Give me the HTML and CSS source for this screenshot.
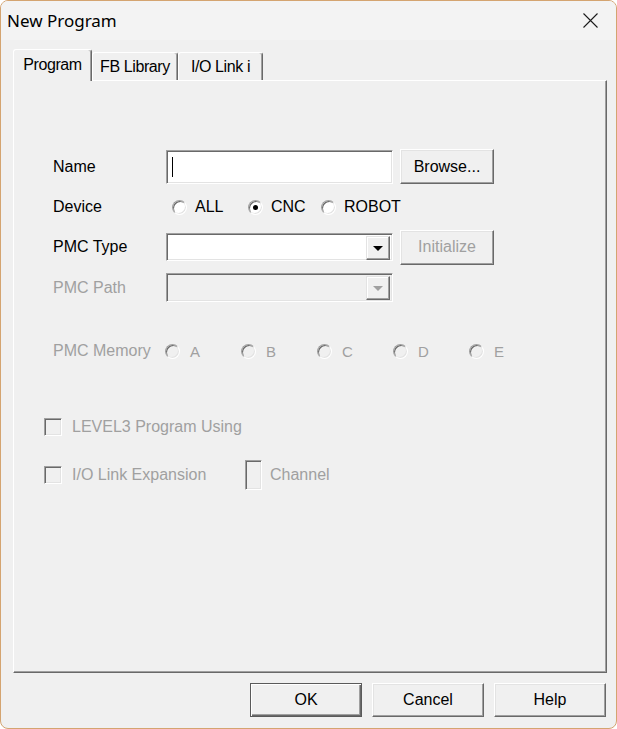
FILE: index.html
```html
<!DOCTYPE html>
<html lang="en">
<head>
    <meta charset="UTF-8">
    <title>New Program</title>
    <link rel="stylesheet" href="styles.css">
</head>
<body>
    <div class="window">
        <div class="titlebar">
            <span class="title">New Program</span>
            <span class="close">
                <svg width="15" height="15" viewBox="0 0 15 15">
                    <path d="M0.5 0.5 L14.5 14.5 M14.5 0.5 L0.5 14.5" stroke="#1b1b1b" stroke-width="1.1" fill="none"/>
                </svg>
            </span>
        </div>

        <div class="tabs">
            <div class="tab tab-program active">Program</div>
            <div class="tab tab-fb">FB Library</div>
            <div class="tab tab-io">I/O Link i</div>
        </div>

        <div class="panel">
            <!-- Name -->
            <div class="row row-name">
                <span class="label">Name</span>
                <div class="field"><span class="caret"></span></div>
                <button class="btn btn-side">Browse...</button>
            </div>

            <!-- Device -->
            <div class="row row-device">
                <span class="label">Device</span>
                <div class="options options-device">
                    <span class="opt opt-all"><span class="radio"></span>ALL</span>
                    <span class="opt opt-cnc"><span class="radio checked"></span>CNC</span>
                    <span class="opt"><span class="radio"></span>ROBOT</span>
                </div>
            </div>

            <!-- PMC Type -->
            <div class="row row-type">
                <span class="label">PMC Type</span>
                <div class="combo">
                    <span class="combo-value"></span>
                    <span class="drop"><span class="arrow"></span></span>
                </div>
                <button class="btn btn-side disabled">Initialize</button>
            </div>

            <!-- PMC Path -->
            <div class="row row-path">
                <span class="label disabled">PMC Path</span>
                <div class="combo combo-disabled">
                    <span class="combo-value"></span>
                    <span class="drop"><span class="arrow"></span></span>
                </div>
            </div>

            <!-- PMC Memory -->
            <div class="row row-memory">
                <span class="label disabled">PMC Memory</span>
                <div class="options options-memory">
                    <span class="opt mem"><span class="radio off"></span>A</span>
                    <span class="opt mem"><span class="radio off"></span>B</span>
                    <span class="opt mem"><span class="radio off"></span>C</span>
                    <span class="opt mem"><span class="radio off"></span>D</span>
                    <span class="opt mem"><span class="radio off"></span>E</span>
                </div>
            </div>

            <!-- Checkboxes -->
            <div class="row row-check row-level">
                <span class="check"></span>
                <span class="check-text">LEVEL3 Program Using</span>
            </div>
            <div class="row row-check row-link">
                <span class="check"></span>
                <span class="check-text link-text">I/O Link Expansion</span>
                <span class="check tall"></span>
                <span class="check-text">Channel</span>
            </div>
        </div>

        <div class="footer">
            <button class="btn btn-foot btn-default">OK</button>
            <button class="btn btn-foot">Cancel</button>
            <button class="btn btn-foot">Help</button>
        </div>
    </div>
</body>
</html>
```

FILE: styles.css
```css
/* Reset basic styles */
* {
    margin: 0;
    padding: 0;
    box-sizing: border-box;
}

body {
    background: #ffffff;
    font-family: 'Liberation Sans', Arial, sans-serif;
    font-size: 16px;
    color: #000000;
}

.window {
    width: 617px;
    height: 729px;
    border: 1px solid #d4a470;
    border-radius: 8px;
    background: #f0f0f0;
    overflow: hidden;
    display: flex;
    flex-direction: column;
}

/* Title bar */
.titlebar {
    height: 39px;
    flex-shrink: 0;
    background: #f3f3f3;
    display: flex;
    align-items: center;
    justify-content: space-between;
    padding-left: 6px;
}

.title {
    font-family: 'Noto Sans', 'Open Sans', sans-serif;
    font-size: 17px;
    color: #000000;
}

.close {
    width: 15px;
    height: 15px;
    margin-right: 18px;
    display: flex;
}

/* Tabs */
.tabs {
    height: 40px;
    flex-shrink: 0;
    display: flex;
    align-items: flex-end;
    padding-left: 12px;
}

.tab {
    height: 28px;
    display: flex;
    align-items: center;
    justify-content: center;
    font-size: 16px;
    letter-spacing: -0.4px;
    border-top: 1px solid #ffffff;
    border-left: 1px solid #ffffff;
    border-right: 1px solid #696969;
    box-shadow: inset -1px 0 #a0a0a0;
    border-radius: 3px 3px 0 0;
    background: #f0f0f0;
    padding-top: 1px;
}

.tab.active {
    height: 32px;
    margin-bottom: -1px;
    position: relative;
    z-index: 1;
    padding-bottom: 2px;
}

.tab-program { width: 79px; }
.tab-fb { width: 86px; }
.tab-io { width: 85px; }

/* Panel */
.panel {
    height: 593px;
    margin: 0 9px 0 12px;
    border: 1px solid;
    border-color: #ffffff #696969 #696969 #ffffff;
    box-shadow: inset -1px -1px #a0a0a0;
    padding-top: 68px;
}

.row {
    display: flex;
    align-items: center;
    padding-left: 39px;
}

.label {
    width: 113px;
    flex-shrink: 0;
}

.disabled {
    color: #a0a0a0;
}

/* Sunken text field */
.field {
    width: 227px;
    height: 34px;
    background: #ffffff;
    border: 1px solid;
    border-color: #a0a0a0 #ffffff #ffffff #a0a0a0;
    box-shadow: inset 1px 1px #696969, inset -1px -1px #e3e3e3;
    display: flex;
    align-items: center;
    padding-left: 5px;
}

.caret {
    width: 1px;
    height: 20px;
    background: #000000;
}

/* Raised buttons */
.btn {
    font-family: 'Liberation Sans', Arial, sans-serif;
    font-size: 16px;
    color: #000000;
    background: #f0f0f0;
    border: 1px solid;
    border-color: #ffffff #696969 #696969 #ffffff;
    box-shadow: inset -1px -1px #a0a0a0, inset 1px 1px #e3e3e3;
}

.btn.disabled {
    color: #a0a0a0;
}

.btn-side {
    width: 94px;
    height: 35px;
    margin-left: 7px;
}

.row-name {
    height: 35px;
}

/* Radio options */
.row-device {
    height: 26px;
    margin-top: 10px;
}

.options {
    display: flex;
    align-items: center;
}

.options-device {
    margin-left: 6px;
}

.opt {
    display: flex;
    align-items: center;
}

.opt-all { width: 76px; }
.opt-cnc { width: 73px; }

.radio {
    width: 15px;
    height: 15px;
    margin-right: 8px;
    border-radius: 50%;
    border: 1px solid;
    border-color: #a0a0a0 #ffffff #ffffff #a0a0a0;
    box-shadow: inset 1px 1px #696969, inset -1px -1px #e3e3e3;
    background: #ffffff;
    display: flex;
    align-items: center;
    justify-content: center;
}

.radio.checked::after {
    content: "";
    width: 5px;
    height: 5px;
    border-radius: 50%;
    background: #000000;
}

.radio.off {
    background: #f0f0f0;
    margin-right: 10px;
}

/* Combo boxes */
.row-type {
    height: 36px;
    margin-top: 9px;
}

.combo {
    width: 227px;
    height: 28px;
    background: #ffffff;
    border: 1px solid;
    border-color: #a0a0a0 #ffffff #ffffff #a0a0a0;
    box-shadow: inset 1px 1px #696969, inset -1px -1px #e3e3e3;
    display: flex;
    padding: 2px 2px 2px 2px;
}

.combo-value {
    flex: 1;
}

.drop {
    width: 24px;
    height: 24px;
    border: 1px solid;
    border-color: #e3e3e3 #696969 #696969 #e3e3e3;
    box-shadow: inset -1px -1px #a0a0a0, inset 1px 1px #ffffff;
    background: #f0f0f0;
    display: flex;
    align-items: center;
    justify-content: center;
}

.arrow {
    width: 0;
    height: 0;
    border-left: 5px solid transparent;
    border-right: 5px solid transparent;
    border-top: 5px solid #000000;
    margin-top: 1px;
}

.combo-disabled {
    background: #f0f0f0;
    height: 29px;
}

.combo-disabled .arrow {
    border-top-color: #a0a0a0;
}

.row-path {
    height: 29px;
    margin-top: 8px;
}

/* PMC Memory */
.row-memory {
    height: 24px;
    margin-top: 37px;
}

.options-memory {
    margin-left: -1px;
}

.mem {
    width: 76px;
    color: #a0a0a0;
    font-size: 15px;
}

/* Check boxes */
.row-check {
    padding-left: 30px;
    color: #a0a0a0;
}

.row-level {
    height: 24px;
    margin-top: 52px;
}

.row-link {
    height: 30px;
    margin-top: 21px;
}

.check {
    width: 18px;
    height: 18px;
    flex-shrink: 0;
    border: 1px solid;
    border-color: #a0a0a0 #ffffff #ffffff #a0a0a0;
    box-shadow: inset 1px 1px #696969, inset -1px -1px #e3e3e3;
    background: #f0f0f0;
}

.check.tall {
    width: 17px;
    height: 30px;
}

.check-text {
    margin-left: 10px;
}

.link-text {
    width: 173px;
}

.check.tall + .check-text {
    margin-left: 8px;
}

/* Footer buttons */
.footer {
    display: flex;
    justify-content: flex-end;
    gap: 10px;
    padding: 10px 10px 0 0;
}

.btn-foot {
    width: 112px;
    height: 34px;
}

.btn-default {
    border: 1px solid #5a5a5a;
    box-shadow: inset 1px 1px #ffffff, inset -1px -1px #696969, inset -2px -2px #a0a0a0;
}
```
